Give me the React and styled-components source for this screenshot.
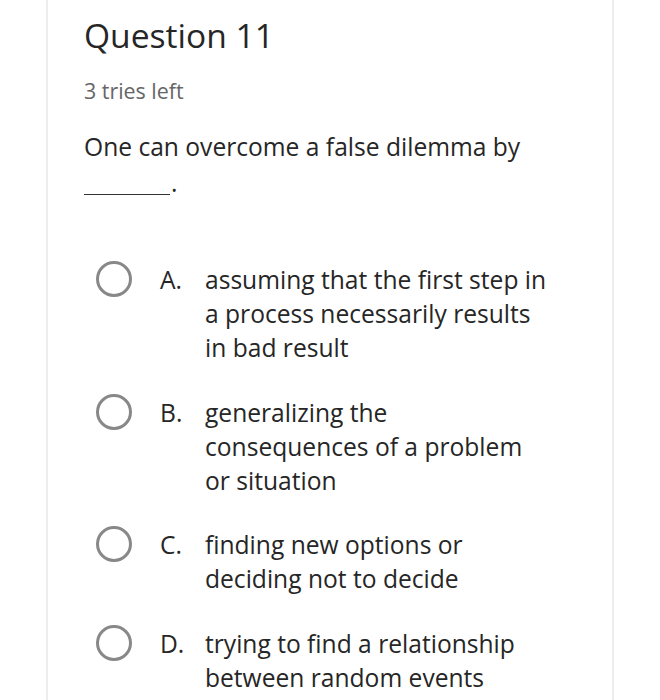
import React from 'react'
import styled, { createGlobalStyle } from 'styled-components'

const GlobalStyle = createGlobalStyle`
  body {
    margin: 0;
    background: #fff;
    font-family: "Open Sans", "Noto Sans", sans-serif;
    color: #262626;
  }
`

const Page = styled.div`
  height: 700px;
  overflow: hidden;
`

const Card = styled.div`
  margin-left: 46px;
  width: 528px;
  min-height: 700px;
  border-left: 2px solid #ededed;
  border-right: 2px solid #ededed;
  padding: 13px 0 0 36px;
`

const Title = styled.h1`
  margin: 0;
  font-size: 33.6px;
  font-weight: 400;
  line-height: 44px;
  color: #262626;
`

const Tries = styled.div`
  margin-top: 20px;
  font-size: 21.4px;
  line-height: 28px;
  color: #666;
`

const Prompt = styled.p`
  margin: 24px 0 0;
  font-size: 24.6px;
  line-height: 36px;
  color: #262626;
`

const Blank = styled.span`
  display: inline-block;
  width: 86px;
  height: 0;
  border-bottom: 1.5px solid #333;
  vertical-align: -3px;
  margin-right: 1px;
`

const Options = styled.div`
  margin-top: 62px;
  display: flex;
  flex-direction: column;
  gap: 30.7px;
`

const Option = styled.label`
  display: flex;
  align-items: flex-start;
  font-size: 24.6px;
  line-height: 34px;
  color: #262626;
`

const Radio = styled.span`
  flex: none;
  width: 36px;
  height: 36px;
  margin: -2px 0 0 12px;
  border: 3.3px solid #888;
  border-radius: 50%;
  box-sizing: border-box;
`

const Letter = styled.span`
  flex: none;
  width: 45px;
  margin-left: 28px;
`

const Text = styled.span`
  width: 344px;
`

const options = [
  { letter: 'A.', text: 'assuming that the first step in a process necessarily results in bad result' },
  { letter: 'B.', text: 'generalizing the consequences of a problem or situation' },
  { letter: 'C.', text: 'finding new options or deciding not to decide' },
  { letter: 'D.', text: 'trying to find a relationship between random events' },
]

export default function App() {
  return (
    <Page>
      <GlobalStyle />
      <Card>
        <Title>Question 11</Title>
        <Tries>3 tries left</Tries>
        <Prompt>
          One can overcome a false dilemma by
          <br />
          <Blank />.
        </Prompt>
        <Options>
          {options.map((o) => (
            <Option key={o.letter}>
              <Radio />
              <Letter>{o.letter}</Letter>
              <Text>{o.text}</Text>
            </Option>
          ))}
        </Options>
      </Card>
    </Page>
  )
}
